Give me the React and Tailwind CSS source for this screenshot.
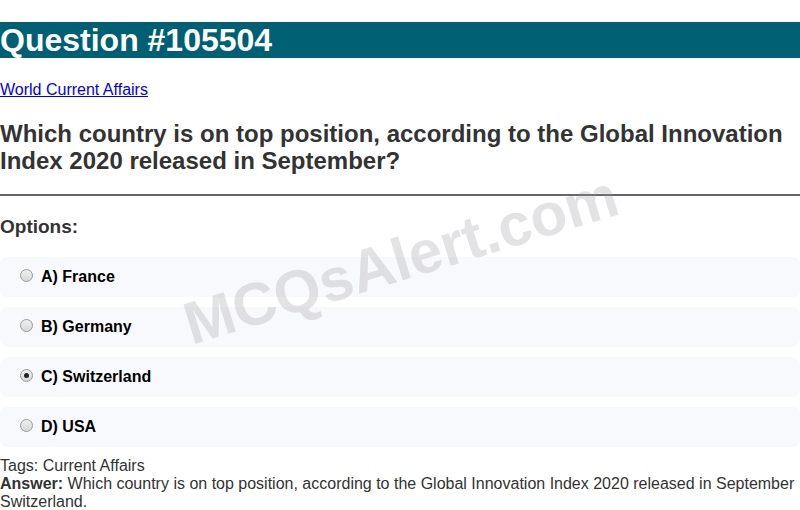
function Radio({ checked }) {
  return (
    <span className="relative -mt-[3px] inline-block h-[13px] w-[13px] shrink-0 rounded-full border border-[#9a9a9a] bg-gradient-to-b from-[#f0f0f0] to-[#d8d8d8]">
      {checked && (
        <span className="absolute left-[3px] top-[3px] h-[5px] w-[5px] rounded-full bg-[#222]" />
      )}
    </span>
  );
}

export default function App() {
  const options = [
    { label: "A) France" },
    { label: "B) Germany" },
    { label: "C) Switzerland", checked: true },
    { label: "D) USA" },
  ];

  return (
    <div className="relative h-[510px] w-[800px] overflow-hidden bg-white font-['Liberation_Sans',Arial,sans-serif] text-[#333]">
      <div className="pt-[22px]">
        <h1 className="h-[36px] bg-[#006073] text-[32px] font-bold leading-[36px] text-white">
          Question #105504
        </h1>
      </div>

      <a
        href="#"
        className="mt-[23px] block w-fit text-[16px] leading-[18px] text-[#0000ee] underline"
      >
        World Current Affairs
      </a>

      <h2 className="mt-[21px] text-[24px] font-bold leading-[27px] text-[#333]">
        Which country is on top position, according to the Global Innovation
        Index 2020 released in September?
      </h2>

      <hr className="mt-[20px] border-t-2 border-[#666]" />

      <h3 className="mt-[20px] text-[19px] font-bold leading-[22px] text-[#333]">
        Options:
      </h3>

      <div className="mt-[19px] flex flex-col gap-[10px]">
        {options.map((o) => (
          <div
            key={o.label}
            className="flex h-[40px] items-center rounded-lg bg-[#f8f9fc] pl-[20px]"
          >
            <Radio checked={o.checked} />
            <span className="ml-[8px] text-[16px] font-bold leading-[18px] text-black">
              {o.label}
            </span>
          </div>
        ))}
      </div>

      <div className="mt-[10px] text-[16px] leading-[18px] text-[#333]">
        <div>Tags: Current Affairs</div>
        <div>
          <b>Answer:</b> Which country is on top position, according to the
          Global Innovation Index 2020 released in September Switzerland.
        </div>
      </div>

      <div className="pointer-events-none absolute left-[401px] top-[260px] -translate-x-1/2 -translate-y-1/2 -rotate-[17deg] whitespace-nowrap text-[60px] font-bold text-[rgba(150,150,160,0.27)]">
        MCQsAlert.com
      </div>
    </div>
  );
}
